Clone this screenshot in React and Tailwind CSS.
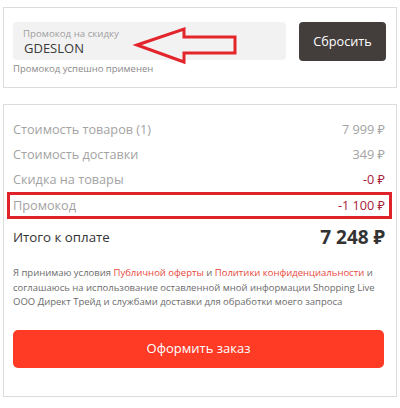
import React from 'react';

const font = { fontFamily: '"Open Sans", "Noto Sans", sans-serif' };

function SummaryRow({ label, value, red }) {
  return (
    <div className="flex items-center justify-between h-[25px] text-[12.7px]">
      <span className="text-[#a3a3a3]">{label}</span>
      <span className={red ? 'text-[#a8203a]' : 'text-[#a3a3a3]'}>{value}</span>
    </div>
  );
}

export default function App() {
  return (
    <div className="w-[400px] h-[408px] bg-white px-[3px] pt-[7px]" style={font}>
      {/* promo card */}
      <div className="h-[81px] border border-[#dcdcdc] pl-[9px] pt-[14px]">
        <div className="flex items-start gap-[13px]">
          <div className="relative">
            <div className="w-[273px] h-[38px] bg-[#f2f2f2] rounded-[4px] pl-[10px] pt-[6px]">
              <div className="text-[9.7px] leading-[12px] text-[#a0a0a0]">Промокод на скидку</div>
              <div className="text-[13px] leading-[17px] text-[#3a3a3a] pl-[1px]">GDESLON</div>
            </div>
            <svg className="absolute left-0 top-0 overflow-visible" width="273" height="38">
              <polygon
                points="124,23 171,7 171,15 222,15 222,31 171,31 171,40"
                fill="none"
                stroke="#e3242b"
                strokeWidth="3"
                strokeLinejoin="miter"
              />
            </svg>
            <div className="text-[9.5px] leading-[12px] text-[#8a8a8a] mt-[3px]">Промокод успешно применен</div>
          </div>
          <button className="w-[87px] h-[39px] rounded-[4px] bg-[#433e3c] text-white text-[12.7px]">
            Сбросить
          </button>
        </div>
      </div>

      {/* summary card */}
      <div className="mt-[16px] h-[293px] border border-[#dcdcdc] pt-[12px]">
        <div className="pl-[9px] pr-[11px]">
          <SummaryRow label="Стоимость товаров (1)" value="7 999 ₽" />
          <SummaryRow label="Стоимость доставки" value="349 ₽" />
          <SummaryRow label="Скидка на товары" value="-0 ₽" red />
        </div>
        <div className="ml-[3px] mr-[4px] h-[27px] border-[3px] border-[#e0232a] pl-[3px] pr-[4px] flex items-center justify-between text-[12.7px]">
          <span className="text-[#a3a3a3]">Промокод</span>
          <span className="text-[#a8203a]">-1 100 ₽</span>
        </div>
        <div className="pl-[9px] pr-[11px] h-[36px] flex items-center justify-between">
          <span className="text-[13.3px] font-medium text-[#333] pt-[1px]">Итого к оплате</span>
          <span className="text-[19px] font-bold text-[#333]">7 248 ₽</span>
        </div>
        <p className="pl-[9px] pr-[6px] mt-[11px] text-[9.5px] leading-[14.5px] text-[#6b6b6b]">
          Я принимаю условия <span className="text-[#e8473d]">Публичной оферты</span> и{' '}
          <span className="text-[#e8473d]">Политики конфиденциальности</span> и соглашаюсь на использование
          оставленной мной информации Shopping Live ООО Директ Трейд и службами доставки для обработки моего
          запроса
        </p>
        <button className="ml-[9px] mt-[20px] w-[371px] h-[38px] rounded-[5px] bg-[#ff3b26] text-white text-[13px]">
          Оформить заказ
        </button>
      </div>
    </div>
  );
}
